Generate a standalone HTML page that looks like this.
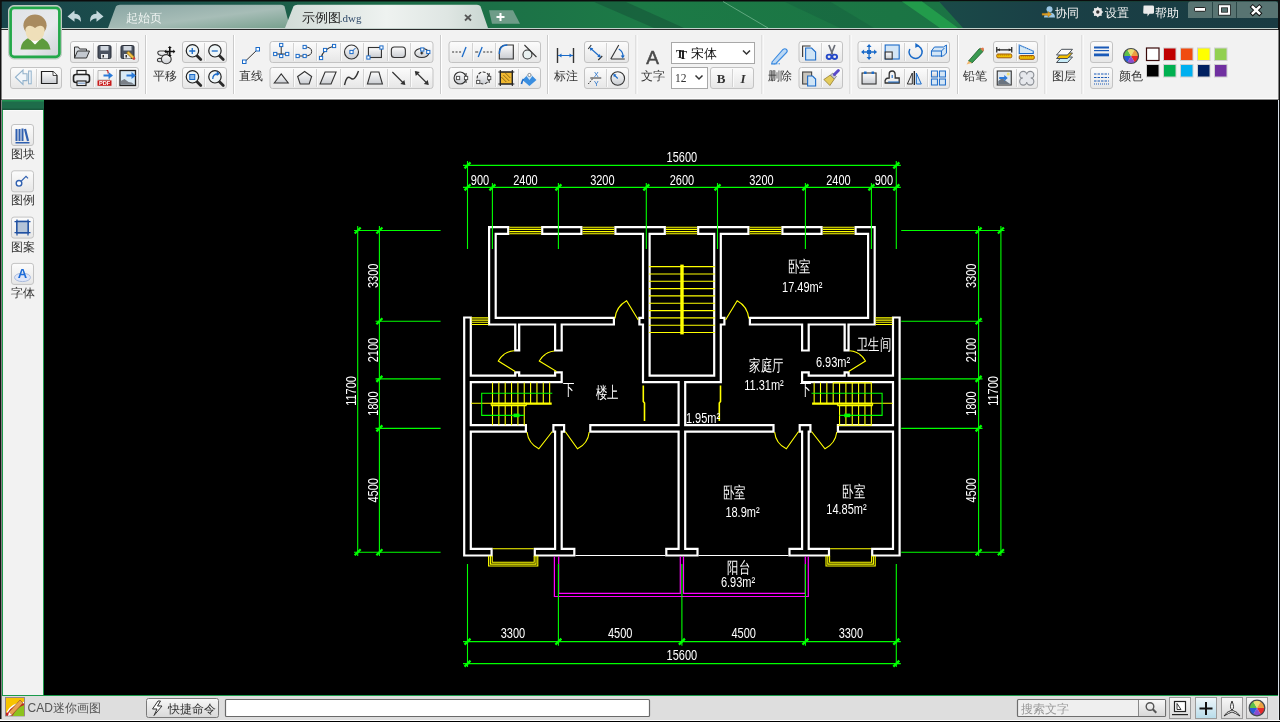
<!DOCTYPE html>
<html><head><meta charset="utf-8">
<style>
*{margin:0;padding:0;box-sizing:border-box}
html,body{width:1280px;height:722px;overflow:hidden;background:#000;font-family:"Liberation Sans",sans-serif;}
.a{position:absolute;left:0;top:0;will-change:transform}
</style></head>
<body>
<svg class="a" width="1280" height="30" style="font-family:'Liberation Sans',sans-serif">
<defs>
<linearGradient id="tg" x1="0" x2="1" y1="0" y2="0">
<stop offset="0" stop-color="#1a464c"/><stop offset="0.12" stop-color="#1b4e4b"/>
<stop offset="0.3" stop-color="#1c6a48"/><stop offset="0.5" stop-color="#1c7a46"/><stop offset="0.7" stop-color="#1b7544"/><stop offset="1" stop-color="#1b6a45"/>
</linearGradient>
<linearGradient id="tgr" x1="0" x2="1" y1="0" y2="0"><stop offset="0" stop-color="#1a4a48"/><stop offset="0.3" stop-color="#1a4046"/><stop offset="1" stop-color="#193b42"/></linearGradient>
<linearGradient id="tab1" x1="0" x2="1" y1="0" y2="1">
<stop offset="0" stop-color="#8aa6a4"/><stop offset="0.55" stop-color="#a7bdb7"/><stop offset="1" stop-color="#77a08d"/>
</linearGradient>
<linearGradient id="tab2" x1="0" x2="1" y1="0" y2="0">
<stop offset="0" stop-color="#d2dcd8"/><stop offset="0.5" stop-color="#eef2f0"/><stop offset="0.8" stop-color="#dfe6e3"/><stop offset="1" stop-color="#c9d6d1"/>
</linearGradient>
</defs>
<rect x="0" y="0" width="1280" height="30" fill="#0c0c0c"/>
<rect x="1.5" y="1.5" width="1276.5" height="27" fill="url(#tg)"/>
<path d="M593,1.5 L625,1.5 L684,28 L654,28 Z" fill="#134a36" opacity="0.45"/>
<path d="M784,1.5 L830,1.5 L874,28 L840,28 Z" fill="#145a3c" opacity="0.35"/>
<path d="M723,1.5 L768,28" stroke="#9ad0b0" stroke-width="0.9" opacity="0.6"/>
<path d="M939,1.5 L1278,1.5 L1278,28 L963,28 Z" fill="url(#tgr)"/>
<path d="M902,1.5 L922,1.5 L958,28 L940,28 Z" fill="#26a84e" opacity="0.75"/>
<rect x="0" y="28" width="1280" height="1" fill="#c4d2cd"/>
<rect x="0" y="29" width="1280" height="1" fill="#2a2a2a"/>
<path d="M108,28 L116,6.2 Q117,4.7 120,4.7 L281,4.7 Q283.5,4.7 284.5,6.2 L290,28 Z" fill="url(#tab1)"/>
<path d="M285,28 L293.5,6.3 Q294.5,4.8 297.5,4.8 L477,4.8 Q479.5,4.8 480.5,6.3 L488,28 Z" fill="url(#tab2)"/>
<path d="M492,23.8 L489,10.2 L513,10.2 L520,23.8 Z" fill="#6e9c88"/>
<path d="M500.5,13 v8 M496.5,17 h8" stroke="#fff" stroke-width="2"/>
<text x="125.5" y="22" font-size="12" fill="#eef3f1">起始页</text>
<text x="302" y="22" font-size="12.5" fill="#1e1e1e">示例图</text>
<text x="339.8" y="21.5" font-size="11" fill="#2d4868" style="font-family:'Liberation Serif',serif">.dwg</text>
<path d="M465,14.8 L471,20.5 M471,14.8 L465,20.5" stroke="#555" stroke-width="1.8"/>
<path d="M67.5,16.5 L74.5,10.5 L74.5,13.8 Q81.5,13.8 81,22 Q78.5,18 74.5,18.5 L74.5,21.8 Z" fill="#c3d7dc"/>
<path d="M103.5,16.5 L96.5,10.5 L96.5,13.8 Q89.5,13.8 90,22 Q92.5,18 96.5,18.5 L96.5,21.8 Z" fill="#c3d7dc"/>
<path d="M1188,18 L1188,4 Q1188,1.5 1190.5,1.5 L1275.5,1.5 Q1278,1.5 1278,4 L1278,18 Z" fill="#587472"/>
<rect x="1212" y="2" width="1" height="16" fill="#2b4747"/>
<rect x="1236" y="2" width="1" height="16" fill="#2b4747"/>
<rect x="1194.5" y="7.5" width="11" height="3.8" rx="0.8" fill="#fff" stroke="#111" stroke-width="0.9"/>
<rect x="1220" y="6.3" width="9" height="7.4" fill="none" stroke="#111" stroke-width="3.6"/>
<rect x="1220" y="6.3" width="9" height="7.4" fill="none" stroke="#fff" stroke-width="2.2"/>
<path d="M1252.8,7 L1259.3,13.3 M1259.3,7 L1252.8,13.3" stroke="#111" stroke-width="4.4" stroke-linecap="square"/>
<path d="M1252.8,7 L1259.3,13.3 M1259.3,7 L1252.8,13.3" stroke="#fff" stroke-width="2.5" stroke-linecap="square"/>
<circle cx="1049.5" cy="9.2" r="3" fill="#9cc7e4"/><path d="M1044,17.5 Q1044,12.5 1049.5,12.5 Q1055,12.5 1055,17.5 Z" fill="#9cc7e4"/>
<path d="M1042,13.3 L1048,13.3 L1048,11.5 L1051.5,14.3 L1048,17 L1048,15.3 L1042,15.3 Z" fill="#e0a020" stroke="#8a5a10" stroke-width="0.4"/>
<text x="1055" y="16.8" font-size="12" fill="#f4f4f4">协同</text>
<g transform="translate(1097.8,12)"><circle r="4.3" fill="#e8e8e8"/><path d="M0,-5.5 L1.5,-3.5 L-1.5,-3.5Z M0,5.5 L1.5,3.5 L-1.5,3.5Z M-5.5,0 L-3.5,1.5 L-3.5,-1.5Z M5.5,0 L3.5,1.5 L3.5,-1.5Z M3.9,3.9 L1.6,3.6 L3.6,1.6Z M-3.9,-3.9 L-1.6,-3.6 L-3.6,-1.6Z M3.9,-3.9 L1.6,-3.6 L3.6,-1.6Z M-3.9,3.9 L-1.6,3.6 L-3.6,1.6Z" fill="#e8e8e8"/><circle r="1.7" fill="#333"/></g>
<text x="1105" y="16.8" font-size="12" fill="#f4f4f4">设置</text>
<path d="M1143.5,6.5 Q1143,5.5 1144.5,5.5 L1152.5,5.5 Q1154,5.5 1154,6.8 L1154,12.5 Q1154,13.8 1152.5,13.8 L1149.5,13.8 L1147.5,16.5 L1147.5,13.8 L1144.5,13.8 Q1143.2,13.8 1143.2,12.5 Z" fill="#eaeaea"/>
<text x="1154.5" y="16.8" font-size="12" fill="#f4f4f4">帮助</text>
<rect x="0" y="0" width="1.5" height="30" fill="#111"/>
<rect x="1278" y="0" width="2" height="30" fill="#111"/>
</svg>
<svg class="a" style="top:30px" width="1280" height="70" viewBox="0 30 1280 70">
<defs>
<linearGradient id="bg" x1="0" x2="0" y1="0" y2="1"><stop offset="0" stop-color="#fcfcfc"/><stop offset="0.5" stop-color="#f1f1f1"/><stop offset="1" stop-color="#e6e6e6"/></linearGradient>
<linearGradient id="av" x1="0" x2="1" y1="0" y2="1"><stop offset="0" stop-color="#dfe2e6"/><stop offset="0.6" stop-color="#e8eaed"/><stop offset="1" stop-color="#cfd3d8"/></linearGradient>
<linearGradient id="ic" x1="0" x2="0" y1="0" y2="1"><stop offset="0" stop-color="#fdfdfd"/><stop offset="1" stop-color="#c9ccd1"/></linearGradient>
<radialGradient id="cw"><stop offset="0" stop-color="#fff"/><stop offset="1" stop-color="#ccc"/></radialGradient>
</defs>
<rect x="0" y="30" width="1280" height="68" fill="#f2f2f2"/>
<rect x="0" y="98" width="1280" height="1" fill="#fdfdfd"/>
<rect x="0" y="99" width="1280" height="1" fill="#8c8c8c"/>
<rect x="0" y="30" width="1.5" height="70" fill="#111"/>
<rect x="1278.5" y="30" width="1.5" height="70" fill="#111"/>

<rect x="10.5" y="67.5" width="51" height="21" rx="2.5" fill="url(#bg)" stroke="#c3c3c3"/><rect x="36" y="69" width="1" height="18" fill="#d3d3d3"/><rect x="37" y="69" width="1" height="18" fill="#fafafa"/>
<path d="M15.5,77.2 L23,70 L23,73.8 L27,73.8 L27,80.6 L23,80.6 L23,84.4 Z" fill="#f2f6fa" stroke="#92b2cc" stroke-width="1.1"/><rect x="28.6" y="71" width="2.6" height="12.8" fill="#f2f6fa" stroke="#92b2cc" stroke-width="1"/>
<path d="M41.5,71.5 L53,71.5 L57,75.5 L57,83.5 L41.5,83.5 Z" fill="url(#ic)" stroke="#222" stroke-width="1.2"/><path d="M53,71.5 L53,75.5 L57,75.5" fill="#fff" stroke="#222" stroke-width="0.8"/>
<rect x="70.5" y="41.5" width="68" height="21" rx="2.5" fill="url(#bg)" stroke="#c3c3c3"/><rect x="93" y="43" width="1" height="18" fill="#d3d3d3"/><rect x="94" y="43" width="1" height="18" fill="#fafafa"/><rect x="116" y="43" width="1" height="18" fill="#d3d3d3"/><rect x="117" y="43" width="1" height="18" fill="#fafafa"/>
<path d="M74.5,58 L74.5,47 L78.5,47 L79.5,49 L86.5,49 L86.5,51 Z" fill="#d9dde2" stroke="#333" stroke-width="1"/><path d="M74.5,58 L77.5,51 L89.5,51 L86.5,58 Z" fill="#c3c8cf" stroke="#333" stroke-width="1"/>
<rect x="98.0" y="45.5" width="13" height="13" rx="1.5" fill="#4a5260" stroke="#2a2f38"/><rect x="100.5" y="46" width="8" height="4.5" fill="#d0d6de"/><rect x="101.0" y="54" width="7" height="4.5" fill="#e8ebee"/><rect x="102.5" y="55" width="1.5" height="2.5" fill="#333"/>
<rect x="121.0" y="45.5" width="13" height="13" rx="1.5" fill="#4a5260" stroke="#2a2f38"/><rect x="123.5" y="46" width="8" height="4.5" fill="#d0d6de"/><rect x="124.0" y="54" width="7" height="4.5" fill="#e8ebee"/><rect x="125.5" y="55" width="1.5" height="2.5" fill="#333"/>
<path d="M126.5,53 L132.5,59 L134.5,59 L134.5,57 L128.5,51 Z" fill="#f0c040" stroke="#7a5a10" stroke-width="0.7"/><circle cx="134.0" cy="58.5" r="1.3" fill="#d04040"/>
<rect x="70.5" y="67.5" width="68" height="21" rx="2.5" fill="url(#bg)" stroke="#c3c3c3"/><rect x="93" y="69" width="1" height="18" fill="#d3d3d3"/><rect x="94" y="69" width="1" height="18" fill="#fafafa"/><rect x="116" y="69" width="1" height="18" fill="#d3d3d3"/><rect x="117" y="69" width="1" height="18" fill="#fafafa"/>
<rect x="77.0" y="70.5" width="9" height="4" fill="#fff" stroke="#222" stroke-width="1.2"/><rect x="73.5" y="74.5" width="16" height="8" rx="2.5" fill="#e9ebee" stroke="#222" stroke-width="1.6"/><rect x="77.0" y="81" width="9" height="4.5" fill="#fff" stroke="#222" stroke-width="1.2"/><rect x="78.0" y="82.5" width="7" height="1.4" fill="#8aa8d0"/>
<path d="M98.0,70.5 L106.5,70.5 L109.5,73.5 L109.5,80 L98.0,80 Z" fill="#f4f4f4" stroke="#aaa" stroke-width="0.8"/><rect x="97.5" y="80.4" width="14" height="5.4" fill="#c81a1a"/><text x="104.5" y="85.3" font-size="5.6" font-weight="bold" fill="#fff" text-anchor="middle">PDF</text><path d="M103.5,74.5 h5 v-2.6 l4.5,3.6 l-4.5,3.6 v-2.6 h-5z" fill="#2a7ad8"/><path d="M106.5,70.5 l1.5,0 v3" stroke="#c81a1a" fill="none"/>
<rect x="120.0" y="70.5" width="15.5" height="15" fill="#d8eaf6" stroke="#222" stroke-width="1.3"/><path d="M120.7,84.8 L120.7,81 L124.5,79 L128.5,82 L131.5,82.5 L134.8,84.8Z" fill="#7a8088"/><path d="M126.5,74.5 h5 v-2.6 l4.5,3.6 l-4.5,3.6 v-2.6 h-5z" fill="#2a7ad8"/>
<rect x="145" y="35" width="1" height="59" fill="#cbcbcb"/><rect x="146" y="35" width="1" height="59" fill="#fff"/>
<g stroke="#3a3a3a" stroke-width="1.1" fill="url(#ic)"><path d="M157.5,59.5 Q157,61.8 159.5,61.8 L164,61.5 L164,58.5 L159.5,58.3 Q157.8,58.3 157.5,59.5Z"/><path d="M157.8,53 Q157.5,51.2 160,51 L164,51 Q166,51 168,53 L166,56 L161,55.5 Q158,55 157.8,53Z"/><ellipse cx="166.3" cy="59.2" rx="4.9" ry="4.6"/></g><path d="M169.8,47.2 v8.6 M165.5,51.5 h8.6" stroke="#111" stroke-width="1.6"/><path d="M169.8,46 l-2,2 h4z M169.8,57 l-2,-2 h4z M164.3,51.5 l2,-2 v4z M175.3,51.5 l-2,-2 v4z" fill="#111"/>
<text x="164.5" y="80.3" font-size="12" fill="#333" text-anchor="middle">平移</text>
<rect x="182.5" y="41.5" width="44" height="21" rx="2.5" fill="url(#bg)" stroke="#c3c3c3"/><rect x="204" y="43" width="1" height="18" fill="#d3d3d3"/><rect x="205" y="43" width="1" height="18" fill="#fafafa"/>
<line x1="196.75" y1="55.5" x2="200.75" y2="59.5" stroke="#2a2a2a" stroke-width="2.8" stroke-linecap="round"/><circle cx="192.45" cy="50.8" r="6.2" fill="#eef5f7" stroke="#222" stroke-width="1.2"/><path d="M189.25,51 h6 M192.25,48 v6" stroke="#1a6ac8" stroke-width="1.3"/>
<line x1="219.25" y1="55.5" x2="223.25" y2="59.5" stroke="#2a2a2a" stroke-width="2.8" stroke-linecap="round"/><circle cx="214.95" cy="50.8" r="6.2" fill="#eef5f7" stroke="#222" stroke-width="1.2"/><path d="M211.75,51 h6" stroke="#1a6ac8" stroke-width="1.3"/>
<rect x="182.5" y="67.5" width="44" height="21" rx="2.5" fill="url(#bg)" stroke="#c3c3c3"/><rect x="204" y="69" width="1" height="18" fill="#d3d3d3"/><rect x="205" y="69" width="1" height="18" fill="#fafafa"/>
<line x1="196.75" y1="81.5" x2="200.75" y2="85.5" stroke="#2a2a2a" stroke-width="2.8" stroke-linecap="round"/><circle cx="192.45" cy="76.8" r="6.2" fill="#eef5f7" stroke="#222" stroke-width="1.2"/><rect x="189.75" y="74.5" width="5" height="5" fill="#8ab8e8" stroke="#1a6ac8"/>
<line x1="219.25" y1="81.5" x2="223.25" y2="85.5" stroke="#2a2a2a" stroke-width="2.8" stroke-linecap="round"/><circle cx="214.95" cy="76.8" r="6.2" fill="#eef5f7" stroke="#222" stroke-width="1.2"/><path d="M212.75,79 Q212.75,74 217.75,74" fill="none" stroke="#1a6ac8" stroke-width="1.3"/><path d="M216.75,71 l3,3 l-3,2z" fill="#1a6ac8"/>
<rect x="233" y="35" width="1" height="59" fill="#cbcbcb"/><rect x="234" y="35" width="1" height="59" fill="#fff"/>
<line x1="244.5" y1="62" x2="257.5" y2="49.5" stroke="#333" stroke-width="1"/><rect x="242.5" y="60" width="3.5" height="3.5" fill="#fff" stroke="#1a6ac8"/><rect x="256" y="47.5" width="3.5" height="3.5" fill="#fff" stroke="#1a6ac8"/>
<text x="251" y="80.3" font-size="12" fill="#333" text-anchor="middle">直线</text>
<rect x="270.0" y="41.5" width="163.0" height="21" rx="2.5" fill="url(#bg)" stroke="#c3c3c3"/><rect x="293" y="43" width="1" height="18" fill="#d3d3d3"/><rect x="294" y="43" width="1" height="18" fill="#fafafa"/><rect x="316" y="43" width="1" height="18" fill="#d3d3d3"/><rect x="317" y="43" width="1" height="18" fill="#fafafa"/><rect x="340" y="43" width="1" height="18" fill="#d3d3d3"/><rect x="341" y="43" width="1" height="18" fill="#fafafa"/><rect x="363" y="43" width="1" height="18" fill="#d3d3d3"/><rect x="364" y="43" width="1" height="18" fill="#fafafa"/><rect x="387" y="43" width="1" height="18" fill="#d3d3d3"/><rect x="388" y="43" width="1" height="18" fill="#fafafa"/><rect x="410" y="43" width="1" height="18" fill="#d3d3d3"/><rect x="411" y="43" width="1" height="18" fill="#fafafa"/>
<path d="M281.2142857142857,45 v13 M275.2142857142857,54 h12" stroke="#333" stroke-width="1"/><rect x="279.6142857142857" y="43.4" width="3.2" height="3.2" fill="#fff" stroke="#1a6ac8" stroke-width="1"/><rect x="279.6142857142857" y="54.4" width="3.2" height="3.2" fill="#fff" stroke="#1a6ac8" stroke-width="1"/><rect x="273.6142857142857" y="52.4" width="3.2" height="3.2" fill="#fff" stroke="#1a6ac8" stroke-width="1"/><rect x="285.6142857142857" y="52.4" width="3.2" height="3.2" fill="#fff" stroke="#1a6ac8" stroke-width="1"/>
<path d="M297.6428571428571,56 h7 q7,0 7,-4.5 q0,-4.5 -7,-4.5" fill="none" stroke="#333" stroke-width="1"/><rect x="296.0428571428571" y="54.4" width="3.2" height="3.2" fill="#fff" stroke="#1a6ac8" stroke-width="1"/><rect x="303.0428571428571" y="54.4" width="3.2" height="3.2" fill="#fff" stroke="#1a6ac8" stroke-width="1"/><rect x="303.0428571428571" y="45.4" width="3.2" height="3.2" fill="#fff" stroke="#1a6ac8" stroke-width="1"/>
<path d="M321.07142857142856,58 Q323.07142857142856,49 334.07142857142856,46" fill="none" stroke="#333" stroke-width="1.2"/><rect x="319.47142857142853" y="56.4" width="3.2" height="3.2" fill="#fff" stroke="#1a6ac8" stroke-width="1"/><rect x="323.47142857142853" y="48.4" width="3.2" height="3.2" fill="#fff" stroke="#1a6ac8" stroke-width="1"/><rect x="332.47142857142853" y="44.4" width="3.2" height="3.2" fill="#fff" stroke="#1a6ac8" stroke-width="1"/>
<circle cx="351.5" cy="52" r="7" fill="url(#ic)" stroke="#333" stroke-width="1.1"/><line x1="351.5" y1="52" x2="355.5" y2="48" stroke="#1a6ac8"/><rect x="349.9" y="50.4" width="3.2" height="3.2" fill="#fff" stroke="#1a6ac8" stroke-width="1"/>
<rect x="368.42857142857144" y="47.5" width="13" height="10" fill="url(#ic)" stroke="#333" stroke-width="1.1"/><rect x="366.8285714285714" y="55.9" width="3.2" height="3.2" fill="#fff" stroke="#1a6ac8" stroke-width="1"/><rect x="379.8285714285714" y="45.9" width="3.2" height="3.2" fill="#fff" stroke="#1a6ac8" stroke-width="1"/>
<rect x="391.3571428571429" y="47" width="14" height="10.5" rx="3" fill="url(#ic)" stroke="#333" stroke-width="1.1"/>
<ellipse cx="421.7857142857143" cy="53" rx="7" ry="4.5" fill="url(#ic)" stroke="#333" stroke-width="1.1"/><path d="M420.2857142857143,53 h3 M421.7857142857143,51.5 v3" stroke="#111"/><rect x="420.68571428571425" y="47.9" width="3.2" height="3.2" fill="#fff" stroke="#1a6ac8" stroke-width="1"/><rect x="426.68571428571425" y="50.4" width="3.2" height="3.2" fill="#fff" stroke="#1a6ac8" stroke-width="1"/>
<rect x="270.0" y="67.5" width="163.0" height="21" rx="2.5" fill="url(#bg)" stroke="#c3c3c3"/><rect x="293" y="69" width="1" height="18" fill="#d3d3d3"/><rect x="294" y="69" width="1" height="18" fill="#fafafa"/><rect x="316" y="69" width="1" height="18" fill="#d3d3d3"/><rect x="317" y="69" width="1" height="18" fill="#fafafa"/><rect x="340" y="69" width="1" height="18" fill="#d3d3d3"/><rect x="341" y="69" width="1" height="18" fill="#fafafa"/><rect x="363" y="69" width="1" height="18" fill="#d3d3d3"/><rect x="364" y="69" width="1" height="18" fill="#fafafa"/><rect x="387" y="69" width="1" height="18" fill="#d3d3d3"/><rect x="388" y="69" width="1" height="18" fill="#fafafa"/><rect x="410" y="69" width="1" height="18" fill="#d3d3d3"/><rect x="411" y="69" width="1" height="18" fill="#fafafa"/>
<path d="M274.2142857142857,83 L281.2142857142857,74 L288.2142857142857,83 Z" fill="url(#ic)" stroke="#333" stroke-width="1.1"/>
<path d="M304.6428571428571,71.5 L311.6428571428571,76.5 L309.1428571428571,84 L300.1428571428571,84 L297.6428571428571,76.5 Z" fill="url(#ic)" stroke="#333" stroke-width="1.1"/>
<path d="M325.07142857142856,72 L336.07142857142856,72 L331.07142857142856,84 L320.07142857142856,84 Z" fill="url(#ic)" stroke="#333" stroke-width="1.1"/>
<path d="M344.5,85 Q346.5,75 350.5,78 Q354.5,82 358.5,71" fill="none" stroke="#333" stroke-width="1.4"/>
<path d="M370.92857142857144,72 L378.92857142857144,72 L382.42857142857144,84 L367.42857142857144,84 Z" fill="url(#ic)" stroke="#333" stroke-width="1.1"/>
<path d="M392.3571428571429,72 L404.3571428571429,84" stroke="#333" stroke-width="1.1"/><path d="M405.3571428571429,85 l-5,-1 l4,-4z" fill="#333"/>
<path d="M415.7857142857143,72 L427.7857142857143,84" stroke="#333" stroke-width="1.1"/><path d="M428.7857142857143,85 l-5,-1 l4,-4z M414.7857142857143,71 l5,1 l-4,4z" fill="#333"/>
<rect x="440" y="35" width="1" height="59" fill="#cbcbcb"/><rect x="441" y="35" width="1" height="59" fill="#fff"/>
<rect x="449.0" y="41.5" width="91.5" height="21" rx="2.5" fill="url(#bg)" stroke="#c3c3c3"/><rect x="472" y="43" width="1" height="18" fill="#d3d3d3"/><rect x="473" y="43" width="1" height="18" fill="#fafafa"/><rect x="495" y="43" width="1" height="18" fill="#d3d3d3"/><rect x="496" y="43" width="1" height="18" fill="#fafafa"/><rect x="518" y="43" width="1" height="18" fill="#d3d3d3"/><rect x="519" y="43" width="1" height="18" fill="#fafafa"/>
<path d="M452.0625,52 h2 M455.5625,52 h2 M459.0625,52 h2" stroke="#333" stroke-width="1.1"/><path d="M462.0625,57 L466.0625,47" stroke="#1a6ac8" stroke-width="1.3"/>
<path d="M475.1875,52 h3 M483.1875,52 h2 M486.6875,52 h2 M490.1875,52 h2" stroke="#333" stroke-width="1.1"/><path d="M478.1875,57 L482.1875,47" stroke="#1a6ac8" stroke-width="1.3"/>
<path d="M499.3125,59 L499.3125,52 Q499.3125,45 506.3125,45 L513.3125,45 L513.3125,59 Z" fill="url(#ic)" stroke="#333" stroke-width="1.1"/><path d="M499.3125,54 Q499.3125,45 507.3125,45" fill="none" stroke="#1a6ac8" stroke-width="1.3"/>
<circle cx="527.4375" cy="54.5" r="4.5" fill="#e8f0f0" stroke="#333" stroke-width="1.1"/><line x1="524.4375" y1="45" x2="536.4375" y2="57" stroke="#333" stroke-width="1.1"/>
<rect x="449.0" y="67.5" width="91.5" height="21" rx="2.5" fill="url(#bg)" stroke="#c3c3c3"/><rect x="472" y="69" width="1" height="18" fill="#d3d3d3"/><rect x="473" y="69" width="1" height="18" fill="#fafafa"/><rect x="495" y="69" width="1" height="18" fill="#d3d3d3"/><rect x="496" y="69" width="1" height="18" fill="#fafafa"/><rect x="518" y="69" width="1" height="18" fill="#d3d3d3"/><rect x="519" y="69" width="1" height="18" fill="#fafafa"/>
<circle cx="460.0625" cy="78" r="6" fill="url(#ic)" stroke="#333" stroke-width="1.1" stroke-dasharray="40 3"/><path d="M466.0625,73 v10" stroke="#333"/><rect x="464.4625" y="76.4" width="3.2" height="3.2" fill="#fff" stroke="#555" stroke-width="1"/><rect x="456.4625" y="76.4" width="3.2" height="3.2" fill="#fff" stroke="#555" stroke-width="1"/>
<circle cx="483.1875" cy="78" r="6" fill="url(#ic)" stroke="#333" stroke-width="1.1" stroke-dasharray="3 1.5"/><path d="M489.1875,73 v10" stroke="#333"/><rect x="487.5875" y="76.4" width="3.2" height="3.2" fill="#fff" stroke="#555" stroke-width="1"/><rect x="476.5875" y="80.4" width="3.2" height="3.2" fill="#fff" stroke="#555" stroke-width="1"/>
<rect x="500.3125" y="72" width="12" height="12" fill="#f0b830" stroke="#333" stroke-width="1.1"/><path d="M498.3125,72 h16 M498.3125,84 h16 M500.3125,70 v16 M512.3125,70 v16" stroke="#222" stroke-width="1.1"/><path d="M503.3125,75 l6,6 M505.3125,73 l5,5 M501.3125,77 l5,5" stroke="#7a5a10" stroke-width="0.8"/>
<path d="M522.4375,80 L529.4375,73 L536.4375,80 L529.4375,86 Z" fill="#3a8ee0"/><path d="M526.4375,76 L529.4375,73 L532.4375,76 L529.4375,80Z" fill="#cfe6fa"/><path d="M521.4375,84 q1,-4 2,-5" stroke="#1a6ac8" stroke-width="1.6" fill="none"/><circle cx="529.4375" cy="75" r="1.6" fill="#fff" stroke="#555" stroke-width="0.6"/>
<rect x="547" y="35" width="1" height="59" fill="#cbcbcb"/><rect x="548" y="35" width="1" height="59" fill="#fff"/>
<path d="M557.5,48 v15 M573.5,48 v15" stroke="#333" stroke-width="1.4"/><path d="M558,55.5 h15" stroke="#1a6ac8" stroke-width="1"/><path d="M558.5,55.5 l3,-2 v4z M572.5,55.5 l-3,-2 v4z" fill="#1a6ac8"/>
<text x="565.5" y="80.3" font-size="12" fill="#333" text-anchor="middle">标注</text>
<rect x="584.5" y="41.5" width="44" height="21" rx="2.5" fill="url(#bg)" stroke="#c3c3c3"/><rect x="606" y="43" width="1" height="18" fill="#d3d3d3"/><rect x="607" y="43" width="1" height="18" fill="#fafafa"/>
<path d="M588.25,49 l3,-4 M598.25,60 l4,-4" stroke="#333" stroke-width="1.1"/><path d="M590.75,48.5 L599.75,56.5" stroke="#1a6ac8" stroke-width="1.2"/><path d="M589.75,47.5 l3.5,0.8 l-2.7,2.7z M600.75,57.5 l-3.5,-0.8 l2.7,-2.7z" fill="#1a6ac8"/>
<path d="M610.75,59 h14 M610.75,59 L618.75,45" stroke="#333" stroke-width="1.1" fill="none"/><path d="M618.75,49 Q623.75,52 622.75,57" fill="none" stroke="#1a6ac8" stroke-width="1.2"/><path d="M622.75,58.5 l-2,-3 h4z" fill="#1a6ac8"/>
<rect x="584.5" y="67.5" width="44" height="21" rx="2.5" fill="url(#bg)" stroke="#c3c3c3"/><rect x="606" y="69" width="1" height="18" fill="#d3d3d3"/><rect x="607" y="69" width="1" height="18" fill="#fafafa"/>
<text x="596.25" y="76.5" font-size="7" fill="#1a6ac8" text-anchor="middle">X</text><text x="596.25" y="85.5" font-size="7" fill="#1a6ac8" text-anchor="middle">Y</text><path d="M590.25,78 h11" stroke="#333"/><path d="M588.25,84 l5,-6" stroke="#333" stroke-dasharray="1.5 1"/>
<circle cx="617.75" cy="78.5" r="6.8" fill="url(#ic)" stroke="#333" stroke-width="1.1"/><path d="M617.75,78.5 L614.25,75" stroke="#1a6ac8" stroke-width="1.1"/><path d="M613.25,74 l3.2,0.6 l-2.6,2.6z" fill="#1a6ac8"/>
<rect x="635.5" y="35" width="1" height="59" fill="#cbcbcb"/><rect x="636.5" y="35" width="1" height="59" fill="#fff"/>
<text x="652.5" y="63.5" font-size="19" fill="#4a4a4a" stroke="#4a4a4a" stroke-width="0.5" text-anchor="middle">A</text>
<text x="652.5" y="80.3" font-size="12" fill="#333" text-anchor="middle">文字</text>
<rect x="671.5" y="42.5" width="83" height="21" fill="#fff" stroke="#a8a8a8"/>
<text x="676" y="57.5" font-size="12" font-weight="bold" fill="#222" style="font-family:'Liberation Serif',serif">T</text><text x="679" y="59" font-size="12" font-weight="bold" fill="#111" style="font-family:'Liberation Serif',serif">T</text>
<text x="691" y="58" font-size="12.5" fill="#111">宋体</text>
<path d="M743,50.5 l3.5,3.5 l3.5,-3.5" stroke="#333" stroke-width="1.5" fill="none"/>
<rect x="671.5" y="67.5" width="36" height="21" fill="#fff" stroke="#a8a8a8"/>
<text x="675" y="82" font-size="11.5" fill="#333" style="font-family:'Liberation Serif',serif">12</text>
<path d="M695.5,75.5 l3.5,3.5 l3.5,-3.5" stroke="#333" stroke-width="1.5" fill="none"/>

<rect x="710.5" y="67.5" width="43" height="21" rx="2.5" fill="url(#bg)" stroke="#c3c3c3"/><rect x="732" y="69" width="1" height="18" fill="#d3d3d3"/><rect x="733" y="69" width="1" height="18" fill="#fafafa"/>
<text x="721.0" y="82.5" font-size="13" font-weight="bold" fill="#333" text-anchor="middle" style="font-family:'Liberation Serif',serif">B</text><text x="743.0" y="82.5" font-size="13" font-style="italic" font-weight="bold" fill="#333" text-anchor="middle" style="font-family:'Liberation Serif',serif">I</text>
<rect x="761.5" y="35" width="1" height="59" fill="#cbcbcb"/><rect x="762.5" y="35" width="1" height="59" fill="#fff"/>
<path d="M772,62 L783,49.5 Q785,48 786.5,49.5 Q788,51 786.5,52.5 L775.5,64 L772,64 Z" fill="#bcd8f4" stroke="#3a8ae0" stroke-width="1.1"/><path d="M771,63.8 h9" stroke="#3a8ae0" stroke-dasharray="1.5 1"/>
<text x="779.5" y="80.3" font-size="12" fill="#333" text-anchor="middle">删除</text>
<rect x="799.0" y="41.5" width="43.5" height="21" rx="2.5" fill="url(#bg)" stroke="#c3c3c3"/><rect x="821" y="43" width="1" height="18" fill="#d3d3d3"/><rect x="822" y="43" width="1" height="18" fill="#fafafa"/>
<path d="M802.625,57 v-11 h8" fill="none" stroke="#333" stroke-width="1.1"/><path d="M805.625,48 h6 l4,4 v8 h-10z" fill="#cfe4f6" stroke="#1a6ac8" stroke-width="1.1"/>
<path d="M828.875,45 L832.675,54.5 M834.875,45 L831.075,54.5" stroke="#6a6e78" stroke-width="1.7"/><ellipse cx="829.075" cy="56.8" rx="2.4" ry="2.2" fill="none" stroke="#2448c8" stroke-width="1.9"/><ellipse cx="834.675" cy="56.8" rx="2.4" ry="2.2" fill="none" stroke="#2448c8" stroke-width="1.9"/>
<rect x="799.0" y="67.5" width="43.5" height="21" rx="2.5" fill="url(#bg)" stroke="#c3c3c3"/><rect x="821" y="69" width="1" height="18" fill="#d3d3d3"/><rect x="822" y="69" width="1" height="18" fill="#fafafa"/>
<rect x="802.625" y="72" width="9" height="12" fill="#c8c4bc" stroke="#444" stroke-width="1.1"/><path d="M807.625,76 h5 l3,3 v7 h-8z" fill="#cfe4f6" stroke="#1a6ac8" stroke-width="1.1"/>
<path d="M823.875,79.5 L830.375,75 L834.375,79 L829.875,85.5 Z" fill="#e4cc5c" stroke="#8a7020" stroke-width="0.7"/><path d="M830.375,75 L832.875,73 L836.375,76.5 L834.375,79 Z" fill="#c8c8d0" stroke="#666" stroke-width="0.6"/><path d="M834.375,74.5 L838.375,70.5" stroke="#5a4ac8" stroke-width="3" stroke-linecap="round"/>
<rect x="849.5" y="35" width="1" height="59" fill="#cbcbcb"/><rect x="850.5" y="35" width="1" height="59" fill="#fff"/>
<rect x="858.0" y="41.5" width="91.5" height="21" rx="2.5" fill="url(#bg)" stroke="#c3c3c3"/><rect x="881" y="43" width="1" height="18" fill="#d3d3d3"/><rect x="882" y="43" width="1" height="18" fill="#fafafa"/><rect x="904" y="43" width="1" height="18" fill="#d3d3d3"/><rect x="905" y="43" width="1" height="18" fill="#fafafa"/><rect x="927" y="43" width="1" height="18" fill="#d3d3d3"/><rect x="928" y="43" width="1" height="18" fill="#fafafa"/>
<path d="M862.0625,52 h14 M869.0625,45 v14" stroke="#1a6ac8" stroke-width="1.3"/><rect x="867.0625" y="50" width="4" height="4" fill="#1a6ac8"/><path d="M861.0625,52 l3,-2.5 v5z M877.0625,52 l-3,-2.5 v5z M869.0625,44 l-2.5,3 h5z M869.0625,60 l-2.5,-3 h5z" fill="#1a6ac8"/>
<rect x="885.1875" y="45" width="14" height="14" fill="#d4e6f6" stroke="#1a6ac8" stroke-width="1.1"/><rect x="885.1875" y="52" width="7" height="7" fill="url(#ic)" stroke="#333" stroke-width="1.1"/>
<path d="M916.3125,45.5 A6.5,6.5 0 1 1 909.8125,49" fill="none" stroke="#1a6ac8" stroke-width="1.5"/><path d="M915.3125,43 l4,2.5 l-4,2.5z" fill="#1a6ac8"/>
<path d="M931.4375,51 l3,-4 h9 l3,-2 v8 l-3,3 h-9 l-3,0z" fill="#d4e6f6" stroke="#1a6ac8" stroke-width="1"/><path d="M931.4375,51 h10 v6 M941.4375,51 l3,-3" fill="none" stroke="#1a6ac8"/>
<rect x="858.0" y="67.5" width="91.5" height="21" rx="2.5" fill="url(#bg)" stroke="#c3c3c3"/><rect x="881" y="69" width="1" height="18" fill="#d3d3d3"/><rect x="882" y="69" width="1" height="18" fill="#fafafa"/><rect x="904" y="69" width="1" height="18" fill="#d3d3d3"/><rect x="905" y="69" width="1" height="18" fill="#fafafa"/><rect x="927" y="69" width="1" height="18" fill="#d3d3d3"/><rect x="928" y="69" width="1" height="18" fill="#fafafa"/>
<rect x="862.0625" y="73" width="14" height="11" fill="url(#ic)" stroke="#333" stroke-width="1.1"/><rect x="864.0625" y="71.5" width="2.5" height="2.5" fill="#1a6ac8"/><rect x="871.5625" y="71.5" width="2.5" height="2.5" fill="#1a6ac8"/>
<path d="M885.1875,83 Q884.1875,78 889.1875,78 L889.1875,74 Q889.1875,71 892.1875,71 Q895.1875,71 895.1875,75 L895.1875,78 L899.1875,78 L899.1875,83Z" fill="none" stroke="#333" stroke-width="1.3"/><path d="M888.1875,82 h11 M892.1875,75 v3" stroke="#1a6ac8" stroke-width="1.1"/>
<path d="M914.3125,71 v14" stroke="#222" stroke-width="1.3"/><path d="M912.3125,84 L912.3125,73 L907.3125,84Z" fill="none" stroke="#333"/><path d="M916.3125,84 L916.3125,73 L921.3125,84Z" fill="#cfe4f6" stroke="#1a6ac8"/>
<rect x="931.4375" y="71" width="6" height="6" fill="url(#ic)" stroke="#1a6ac8"/><rect x="939.4375" y="71" width="6" height="6" fill="#d4e6f6" stroke="#1a6ac8"/><rect x="931.4375" y="79" width="6" height="6" fill="#d4e6f6" stroke="#1a6ac8"/><rect x="939.4375" y="79" width="6" height="6" fill="#d4e6f6" stroke="#1a6ac8"/>
<rect x="957" y="35" width="1" height="59" fill="#cbcbcb"/><rect x="958" y="35" width="1" height="59" fill="#fff"/>
<path d="M968.5,61 L979,49 Q981,47.5 982.5,49 Q984,50.5 982.5,52 L972,63 Z" fill="#3a9a50" stroke="#1a5a2a" stroke-width="0.8"/><path d="M968.5,61 L966.5,64.5 L972,63 Z" fill="#f4b870"/><path d="M980,48.5 L983,51.5 Q985,49 983,47.5Z" fill="#e07a50"/>
<text x="974.5" y="80.3" font-size="12" fill="#333" text-anchor="middle">铅笔</text>
<rect x="993.5" y="41.5" width="44" height="21" rx="2.5" fill="url(#bg)" stroke="#c3c3c3"/><rect x="1016" y="43" width="1" height="18" fill="#d3d3d3"/><rect x="1017" y="43" width="1" height="18" fill="#fafafa"/>
<path d="M996.75,47 v5.5 M1011.75,47 v5.5 M996.75,49.8 h15" stroke="#222" stroke-width="1.2"/><path d="M997.75,49.8 l2,-1.5 v3z M1010.75,49.8 l-2,-1.5 v3z" fill="#222"/><rect x="996.75" y="54" width="15" height="3.8" rx="1.2" fill="#f2c200" stroke="#a05a08" stroke-width="1"/><path d="M998.75,54.3 v1.5 M1000.75,54.3 v1.5 M1002.75,54.3 v1.5 M1004.75,54.3 v1.5 M1006.75,54.3 v1.5 M1008.75,54.3 v1.5" stroke="#a05a08" stroke-width="0.6"/>
<path d="M1019.25,45 L1019.25,53.5 L1033.25,53.5 L1033.25,51 Z" fill="#d4e8f4" stroke="#1a6ac8" stroke-width="1.1"/><path d="M1019.25,45 L1033.25,51" stroke="#fff" stroke-width="0.6" stroke-dasharray="1.2 1.2"/><rect x="1019.25" y="55.5" width="15" height="3.8" rx="1.2" fill="#f2c200" stroke="#a05a08" stroke-width="1"/><path d="M1021.25,55.8 v1.5 M1023.25,55.8 v1.5 M1025.25,55.8 v1.5 M1027.25,55.8 v1.5 M1029.25,55.8 v1.5 M1031.25,55.8 v1.5" stroke="#a05a08" stroke-width="0.6"/>
<rect x="993.5" y="67.5" width="44" height="21" rx="2.5" fill="url(#bg)" stroke="#c3c3c3"/><rect x="1016" y="69" width="1" height="18" fill="#d3d3d3"/><rect x="1017" y="69" width="1" height="18" fill="#fafafa"/>
<rect x="997.25" y="71" width="14" height="14" fill="#dfe8f0" stroke="#333" stroke-width="1.1"/><path d="M998.25,84 L998.25,81 L1002.25,78 L1007.25,82 L1010.25,84Z" fill="#6a7480"/><path d="M999.25,77 h5 v-2 l3.5,3 l-3.5,3 v-2 h-5z" fill="#2a7ad8"/><circle cx="1008.25" cy="74" r="1.5" fill="#f0e070"/>
<g fill="#e6e8ec" stroke="#8a8e94" stroke-width="1.1"><circle cx="1023.25" cy="75" r="3.6"/><circle cx="1030.25" cy="75" r="3.6"/><circle cx="1023.25" cy="81.5" r="3.6"/><circle cx="1030.25" cy="81.5" r="3.6"/></g><rect x="1022.75" y="74.5" width="8" height="7.5" fill="#e6e8ec"/>
<rect x="1044.5" y="35" width="1" height="59" fill="#cbcbcb"/><rect x="1045.5" y="35" width="1" height="59" fill="#fff"/>
<path d="M1056.5,62.5 L1061.5,57 L1072.5,57 L1067.5,62.5 Z" fill="#c8ecf8" stroke="#4a5058" stroke-width="1"/><path d="M1056.5,58.5 L1061.5,53 L1072.5,53 L1067.5,58.5 Z" fill="#f4c000" stroke="#4a5058" stroke-width="1"/><path d="M1056.5,55 L1061.5,49.3 L1072.5,49.3 L1067.5,55 Z" fill="#fbfbfb" stroke="#4a5058" stroke-width="1"/>
<text x="1063.5" y="80.3" font-size="12" fill="#333" text-anchor="middle">图层</text>
<rect x="1081.5" y="35" width="1" height="59" fill="#cbcbcb"/><rect x="1082.5" y="35" width="1" height="59" fill="#fff"/>
<rect x="1090.5" y="41.5" width="22" height="21" rx="2.5" fill="url(#bg)" stroke="#c3c3c3"/>
<rect x="1094" y="46.5" width="15" height="2" fill="#1a5ab8"/><rect x="1094" y="50" width="15" height="1.2" fill="#1a5ab8"/><rect x="1094" y="53.5" width="15" height="2.8" fill="#1a5ab8"/>
<rect x="1090.5" y="67.5" width="22" height="21" rx="2.5" fill="url(#bg)" stroke="#c3c3c3"/>
<path d="M1094,74 h15 M1094,77.5 h15 M1094,81 h15" stroke="#1a5ab8" stroke-width="1" stroke-dasharray="2.5 1"/><path d="M1094,84 h15" stroke="#1a5ab8" stroke-width="1" stroke-dasharray="1 1"/>

<path d="M1131,56 L1138.50,56.00 A7.5,7.5 0 0 1 1134.75,62.50 Z" fill="#e82a2a"/><path d="M1131,56 L1134.75,62.50 A7.5,7.5 0 0 1 1127.25,62.50 Z" fill="#8a4ed0"/><path d="M1131,56 L1127.25,62.50 A7.5,7.5 0 0 1 1123.50,56.00 Z" fill="#2a5ad8"/><path d="M1131,56 L1123.50,56.00 A7.5,7.5 0 0 1 1127.25,49.50 Z" fill="#5cc048"/><path d="M1131,56 L1127.25,49.50 A7.5,7.5 0 0 1 1134.75,49.50 Z" fill="#ece070"/><path d="M1131,56 L1134.75,49.50 A7.5,7.5 0 0 1 1138.50,56.00 Z" fill="#eca040"/><circle cx="1131" cy="56" r="7.5" fill="none" stroke="#454a50" stroke-width="1.2"/>
<text x="1130.5" y="80.3" font-size="12" fill="#333" text-anchor="middle">颜色</text>
<rect x="1146.5" y="48" width="12.5" height="12.5" fill="#ffffff" stroke="#3a0a0a" stroke-width="1.2"/>
<rect x="1146.5" y="64.5" width="12.5" height="12.5" fill="#000000" stroke="#d0d0d0"/>
<rect x="1163.5" y="48" width="12.5" height="12.5" fill="#c00000" stroke="#d0d0d0" stroke-width="1"/>
<rect x="1163.5" y="64.5" width="12.5" height="12.5" fill="#00b050" stroke="#d0d0d0"/>
<rect x="1180.5" y="48" width="12.5" height="12.5" fill="#f04c10" stroke="#d0d0d0" stroke-width="1"/>
<rect x="1180.5" y="64.5" width="12.5" height="12.5" fill="#00b0f0" stroke="#d0d0d0"/>
<rect x="1197.5" y="48" width="12.5" height="12.5" fill="#ffff00" stroke="#d0d0d0" stroke-width="1"/>
<rect x="1197.5" y="64.5" width="12.5" height="12.5" fill="#002060" stroke="#d0d0d0"/>
<rect x="1214.5" y="48" width="12.5" height="12.5" fill="#92d050" stroke="#d0d0d0" stroke-width="1"/>
<rect x="1214.5" y="64.5" width="12.5" height="12.5" fill="#7030a0" stroke="#d0d0d0"/>
</svg><svg class="a" style="top:100px" width="46" height="596" viewBox="0 100 46 596">
<rect x="0" y="100" width="46" height="596" fill="#f2f2f2"/>
<rect x="0" y="100" width="1.5" height="596" fill="#111"/>
<rect x="2" y="100" width="1" height="596" fill="#1f9a4c"/>
<rect x="43" y="100" width="1" height="596" fill="#1f9a4c"/>
<rect x="44" y="100" width="2" height="596" fill="#000"/>
<rect x="2" y="100" width="42" height="10" fill="#1e6c4a"/>
<rect x="2" y="100" width="42" height="1.5" fill="#1f9050"/>
<rect x="2" y="108.5" width="42" height="1.5" fill="#195a3e"/>
<rect x="3" y="110" width="40" height="1" fill="#fafafa"/>

<rect x="11.5" y="124.5" width="22" height="21" rx="2.5" fill="url(#bg)" stroke="#c3c3c3"/>
<text x="22.5" y="158.0" font-size="12" fill="#333" text-anchor="middle" style="font-family:'Liberation Sans',sans-serif">图块</text>
<rect x="11.5" y="170.8" width="22" height="21" rx="2.5" fill="url(#bg)" stroke="#c3c3c3"/>
<text x="22.5" y="204.3" font-size="12" fill="#333" text-anchor="middle" style="font-family:'Liberation Sans',sans-serif">图例</text>
<rect x="11.5" y="217.1" width="22" height="21" rx="2.5" fill="url(#bg)" stroke="#c3c3c3"/>
<text x="22.5" y="250.6" font-size="12" fill="#333" text-anchor="middle" style="font-family:'Liberation Sans',sans-serif">图案</text>
<rect x="11.5" y="263.4" width="22" height="21" rx="2.5" fill="url(#bg)" stroke="#c3c3c3"/>
<text x="22.5" y="296.9" font-size="12" fill="#333" text-anchor="middle" style="font-family:'Liberation Sans',sans-serif">字体</text>
<path d="M16.5,129 v12 M19.5,129 v12 M22.5,128.5 v12.5" stroke="#3060b0" stroke-width="2"/><path d="M25,129 L28,141" stroke="#3060b0" stroke-width="2.2"/><rect x="15.5" y="142" width="14" height="1.5" fill="#3060b0"/>
<circle cx="19" cy="183.3" r="2.8" fill="#fff" stroke="#3060b0" stroke-width="1.4"/><path d="M21,181.3 L26,176.3 L28,178.3" fill="none" stroke="#3060b0" stroke-width="1.2"/>
<rect x="16.5" y="221.1" width="12" height="12" fill="#b4c4d8" stroke="#3060b0"/><path d="M14.5,221.6 h16 M14.5,232.6 h16 M17,219.6 v16 M28,219.6 v16" stroke="#2050a0" stroke-width="1.2"/>
<ellipse cx="22.5" cy="277.4" rx="8" ry="4.2" fill="#dfe6f8" stroke="#9ab0d8" stroke-width="0.8"/><text x="22.5" y="277.9" font-size="13" font-weight="bold" fill="#1a6ad8" text-anchor="middle" style="font-family:'Liberation Sans',sans-serif">A</text>
</svg><svg class="a" style="top:695px" width="1280" height="27" viewBox="0 695 1280 27" style="font-family:'Liberation Sans',sans-serif">
<defs><linearGradient id="sb" x1="0" x2="0" y1="0" y2="1"><stop offset="0" stop-color="#f8f8f8"/><stop offset="1" stop-color="#d8d8d8"/></linearGradient>
<linearGradient id="hb" x1="0" x2="0" y1="0" y2="1"><stop offset="0" stop-color="#eef6fa"/><stop offset="1" stop-color="#b8dcea"/></linearGradient></defs>
<rect x="0" y="695" width="1280" height="27" fill="#dedede"/>
<rect x="2" y="695" width="1276" height="1" fill="#1a9a4a"/>
<rect x="0" y="695" width="1.5" height="24" fill="#111"/>
<rect x="1278" y="695" width="1" height="25" fill="#e6eaec"/><rect x="1279" y="695" width="1" height="27" fill="#111"/>
<rect x="0" y="720" width="1280" height="1" fill="#fff"/>
<rect x="0" y="721" width="1280" height="1" fill="#000"/>
<rect x="5.5" y="697.5" width="19" height="18.5" fill="#c82020" stroke="#888" stroke-width="0.8"/>
<path d="M6,698 H24 V702.5 Q12,703.5 7,712.5 L6,712.5 Z" fill="#f8c400"/>
<path d="M7,712.5 Q12,703.5 24,702.5" stroke="#fff" stroke-width="1.3" fill="none"/>
<path d="M12.5,716 Q16,708 24,705 V716 Z" fill="#8cc21e"/>
<path d="M9,712 L20,700 L23,703 L12,715 Z" fill="#e8a050" stroke="#8a5020" stroke-width="0.6"/><path d="M9,712 L8,716 L12,715Z" fill="#fff"/>
<text x="27.5" y="712" font-size="12" fill="#555" style="font-family:'Liberation Sans',sans-serif">CAD迷你画图</text>
<rect x="146.5" y="698.5" width="72" height="19" rx="2" fill="url(#sb)" stroke="#7a7a7a"/>
<path d="M158,701 L152.5,709 L157,709 L154,715.5 L162,706 L157.5,706 L160.5,701 Z" fill="#fff" stroke="#333" stroke-width="1"/>
<text x="168" y="712.5" font-size="12" fill="#333" style="font-family:'Liberation Sans',sans-serif">快捷命令</text>
<rect x="225.5" y="699.5" width="424" height="17" rx="1" fill="#fff" stroke="#6a6a6a" stroke-width="1.2"/>
<rect x="1017.5" y="699.5" width="148" height="17" rx="1" fill="#efefef" stroke="#6e6e6e" stroke-width="1.2"/>
<rect x="1138.5" y="700" width="26.5" height="16" fill="url(#sb)"/>
<rect x="1138" y="700" width="1" height="16" fill="#888"/>
<text x="1020.5" y="712.5" font-size="12" fill="#999" style="font-family:'Liberation Sans',sans-serif">搜索文字</text>
<circle cx="1150" cy="706.5" r="3.8" fill="none" stroke="#555" stroke-width="1.4"/><path d="M1152.8,709.3 l3.5,3.5" stroke="#555" stroke-width="2"/>
<rect x="1169.5" y="697.5" width="21" height="21" fill="url(#sb)" stroke="#9a9a9a"/>
<rect x="1195.5" y="697.5" width="21" height="21" fill="url(#hb)" stroke="#9a9a9a"/>
<rect x="1221.5" y="697.5" width="21" height="21" fill="url(#sb)" stroke="#9a9a9a"/>
<rect x="1246.5" y="697.5" width="21" height="21" fill="url(#sb)" stroke="#9a9a9a"/>
<rect x="1174.5" y="701.5" width="11" height="10" fill="#fff" stroke="#222" stroke-width="1.2"/><path d="M1177,709.5 v-6 l4,6z" fill="none" stroke="#222" stroke-width="0.9"/><rect x="1172" y="714" width="16" height="1.2" fill="#222"/>
<path d="M1206,702 v13 M1199.5,708.5 h13" stroke="#111" stroke-width="2"/>
<path d="M1232,701 Q1229,708 1232,710 Q1226,712 1224,716 Q1229,713 1232,712 Q1235,713 1240,716 Q1238,712 1232,710 Q1235,708 1232,701Z" fill="#fff" stroke="#333" stroke-width="1"/>
<path d="M1257,708 L1264.80,708.00 A7.8,7.8 0 0 1 1260.90,714.75 Z" fill="#e82a2a"/><path d="M1257,708 L1260.90,714.75 A7.8,7.8 0 0 1 1253.10,714.75 Z" fill="#8a4ed0"/><path d="M1257,708 L1253.10,714.75 A7.8,7.8 0 0 1 1249.20,708.00 Z" fill="#2a5ad8"/><path d="M1257,708 L1249.20,708.00 A7.8,7.8 0 0 1 1253.10,701.25 Z" fill="#5cc048"/><path d="M1257,708 L1253.10,701.25 A7.8,7.8 0 0 1 1260.90,701.25 Z" fill="#ece070"/><path d="M1257,708 L1260.90,701.25 A7.8,7.8 0 0 1 1264.80,708.00 Z" fill="#eca040"/><circle cx="1257" cy="708" r="7.8" fill="none" stroke="#454a50" stroke-width="1.2"/>
</svg>
<svg class="a" style="left:46px;top:100px" width="1232" height="595" viewBox="46 100 1232 595">
<rect x="46" y="100" width="1232" height="595" fill="#000"/>
<path d="M492.40,230.50L504.90,230.50M545.50,230.50L578.10,230.50M618.70,230.50L661.50,230.50M701.50,230.50L745.10,230.50M785.70,230.50L818.30,230.50M858.90,230.50L871.40,230.50M492.40,230.50L492.40,321.20M492.40,321.20L610.60,321.20M642.70,321.20L646.30,321.20M467.50,320.80L467.50,552.20M646.30,230.50L646.30,378.90M558.40,321.20L558.40,347.20M558.40,375.60L558.40,378.90M467.50,378.90L558.40,378.90M467.50,428.40L522.60,428.40M556.70,428.40L560.80,428.40M593.60,428.40L681.90,428.40M558.40,428.40L558.40,552.20M467.50,552.20L488.30,552.20M538.10,552.20L571.00,552.20M871.40,230.50L871.40,321.20M753.20,321.20L871.40,321.20M717.50,321.20L721.10,321.20M896.30,320.80L896.30,552.20M717.50,230.50L717.50,378.90M805.40,321.20L805.40,347.20M805.40,375.60L805.40,378.90M805.40,378.90L896.30,378.90M841.20,428.40L896.30,428.40M803.00,428.40L807.10,428.40M681.90,428.40L770.20,428.40M805.40,428.40L805.40,552.20M875.50,552.20L896.30,552.20M792.80,552.20L825.70,552.20M646.30,378.90L717.50,378.90M681.90,378.90L681.90,552.20M669.60,552.20L694.20,552.20" stroke="#fff" stroke-width="8.8" stroke-linecap="square" fill="none" />
<path d="M517.20,321.20L517.20,348.50M517.20,374.30L517.20,378.90M846.60,321.20L846.60,348.50M846.60,374.30L846.60,378.90" stroke="#fff" stroke-width="6.2" stroke-linecap="square" fill="none" />
<path d="M492.40,230.50L504.90,230.50M545.50,230.50L578.10,230.50M618.70,230.50L661.50,230.50M701.50,230.50L745.10,230.50M785.70,230.50L818.30,230.50M858.90,230.50L871.40,230.50M492.40,230.50L492.40,321.20M492.40,321.20L610.60,321.20M642.70,321.20L646.30,321.20M467.50,320.80L467.50,552.20M646.30,230.50L646.30,378.90M558.40,321.20L558.40,347.20M558.40,375.60L558.40,378.90M467.50,378.90L558.40,378.90M467.50,428.40L522.60,428.40M556.70,428.40L560.80,428.40M593.60,428.40L681.90,428.40M558.40,428.40L558.40,552.20M467.50,552.20L488.30,552.20M538.10,552.20L571.00,552.20M871.40,230.50L871.40,321.20M753.20,321.20L871.40,321.20M717.50,321.20L721.10,321.20M896.30,320.80L896.30,552.20M717.50,230.50L717.50,378.90M805.40,321.20L805.40,347.20M805.40,375.60L805.40,378.90M805.40,378.90L896.30,378.90M841.20,428.40L896.30,428.40M803.00,428.40L807.10,428.40M681.90,428.40L770.20,428.40M805.40,428.40L805.40,552.20M875.50,552.20L896.30,552.20M792.80,552.20L825.70,552.20M646.30,378.90L717.50,378.90M681.90,378.90L681.90,552.20M669.60,552.20L694.20,552.20" stroke="#000" stroke-width="4.4" stroke-linecap="square" fill="none" />
<path d="M517.20,321.20L517.20,348.50M517.20,374.30L517.20,378.90M846.60,321.20L846.60,348.50M846.60,374.30L846.60,378.90" stroke="#000" stroke-width="1.6" stroke-linecap="square" fill="none" />
<path d="M575.4,555.5 H665.2 M698.5999999999999,555.5 H788.4" stroke="#fff" stroke-width="1"/>
<path d="M509.3,227.20H541.1M509.3,229.40H541.1M509.3,231.60H541.1M509.3,233.80H541.1M582.5,227.20H614.3M582.5,229.40H614.3M582.5,231.60H614.3M582.5,233.80H614.3M665.9,227.20H697.1M665.9,229.40H697.1M665.9,231.60H697.1M665.9,233.80H697.1M749.5,227.20H781.3M749.5,229.40H781.3M749.5,231.60H781.3M749.5,233.80H781.3M822.7,227.20H854.5M822.7,229.40H854.5M822.7,231.60H854.5M822.7,233.80H854.5M471.4,317.90H488.5M471.4,320.10H488.5M471.4,322.30H488.5M471.4,324.50H488.5M875.3,317.90H892.4M875.3,320.10H892.4M875.3,322.30H892.4M875.3,324.50H892.4" stroke="#ffff00" stroke-width="1.1" fill="none"/>
<path d="M492.7,548.7H533.7M492.2,555.7V562.23H534.2V555.7M490.4,555.7V564.12H536.0V555.7M488.59999999999997,555.7V566.00H537.8000000000001V555.7M830.0999999999999,548.7H871.0999999999999M829.5999999999999,555.7V562.23H871.5999999999999V555.7M827.8,555.7V564.12H873.3999999999999V555.7M825.9999999999999,555.7V566.00H875.1999999999999V555.7" stroke="#ffff00" stroke-width="1.1" fill="none"/>
<path d="M554.4,556.5V596.5H808.3V556.5 M558.7,556.5V593.3H680.3V556.5 M683.5,556.5V593.3H805.3V556.5" stroke="#ff00ff" stroke-width="1.2" fill="none"/>
<path d="M638.3,320.0L626.6,300.7A22.57,22.57 0 0 0 615.0,318.5M725.5,320.0L737.1999999999999,300.7A22.57,22.57 0 0 1 748.8,318.5M515.2,371.5L498.3,361.0A19.90,19.90 0 0 1 514.2,350.8M556.5,371.5L539.3,361.0A20.15,20.15 0 0 1 554.2,351.0M848.5999999999999,371.5L865.5,361.0A19.90,19.90 0 0 0 849.5999999999999,350.8M552.3,431.5L538.8,448.8A21.94,21.94 0 0 1 527.0,432.0M565.2,431.5L577.5,448.8A21.23,21.23 0 0 0 589.2,432.0M811.5,431.5L825.0,448.8A21.94,21.94 0 0 0 836.8,432.0M798.5999999999999,431.5L786.3,448.8A21.23,21.23 0 0 1 774.5999999999999,432.0" stroke="#ffff00" stroke-width="1.1" fill="none"/>
<path d="M643.3,385.5V401.5L644.5,403V421 M720.5,385.5V401.5L719.3,403V421" stroke="#ffff00" stroke-width="1.6" fill="none"/>
<path d="M491.2,403.6H551.7M812.1,403.6H872.6" stroke="#ffff00" stroke-width="2.2" fill="none"/>
<path d="M649,266.60H714.8M649,273.93H714.8M649,281.26H714.8M649,288.59H714.8M649,295.92H714.8M649,303.25H714.8M649,310.58H714.8M649,317.91H714.8M649,325.24H714.8M649,332.57H714.8M492.50,382.5V403.3M492.50,405.6V425.3M498.85,382.5V403.3M498.85,405.6V425.3M505.20,382.5V403.3M505.20,405.6V425.3M511.55,382.5V403.3M511.55,405.6V425.3M517.90,382.5V403.3M517.90,405.6V425.3M524.25,382.5V403.3M524.25,405.6V425.3M530.60,382.5V403.3M536.95,382.5V403.3M543.30,382.5V403.3M549.65,382.5V403.3M471.1,403.3H491.2M491.2,405.6H526.4M491.2,402.8V405.6M526.4,402.8V405.6M871.30,382.5V403.3M871.30,405.6V425.3M864.95,382.5V403.3M864.95,405.6V425.3M858.60,382.5V403.3M858.60,405.6V425.3M852.25,382.5V403.3M852.25,405.6V425.3M845.90,382.5V403.3M845.90,405.6V425.3M839.55,382.5V403.3M839.55,405.6V425.3M833.20,382.5V403.3M826.85,382.5V403.3M820.50,382.5V403.3M814.15,382.5V403.3M872.6,403.3H892.7M837.4,405.6H872.6M872.6,402.8V405.6M837.4,402.8V405.6M833.4,382.9H871.8M837.4,425.2H871.8" stroke="#ffff00" stroke-width="1.1" fill="none"/>
<rect x="680.3" y="264.6" width="3.4" height="69.8" fill="#ffff00"/>
<path d="M552.3,393.2H481.7V415.4H524.3 M811.5,393.2H882.0999999999999V415.4H839.5" stroke="#00ff00" stroke-width="1.1" fill="none"/>
<rect x="513.5" y="413.6" width="6" height="3.6" fill="#00ff00"/><rect x="844.3" y="413.6" width="6" height="3.6" fill="#00ff00"/>
<path d="M463,165.4H900.8 M463,187.4H900.8M467.5,161V249M492.4,183V249M558.4,183V249M646.3,183V249M717.5,183V249M805.4,183V249M871.4,183V249M896.3,161V249M463,641.6H900.8 M463,663.6H900.8M467.5,564V667M558.4,564V645.7M681.9,564V645.7M805.4,564V645.7M896.3,564V667M357.7,226V556 M379.4,226V556 M1000.9,226V556 M978.6,226V556M354,230.5H440.6M901.2,230.5H1004.5M375.5,321.2H440.6M901.2,321.2H982.5M375.5,378.9H440.6M901.2,378.9H982.5M375.5,428.4H440.6M901.2,428.4H982.5M354,552.2H440.6M901.2,552.2H1004.5" stroke="#00ff00" stroke-width="1.1" fill="none"/>
<path d="M464.5,190.4L470.5,184.4M489.4,190.4L495.4,184.4M555.4,190.4L561.4,184.4M643.3,190.4L649.3,184.4M714.5,190.4L720.5,184.4M802.4,190.4L808.4,184.4M868.4,190.4L874.4,184.4M893.3,190.4L899.3,184.4M464.5,168.4L470.5,162.4M893.3,168.4L899.3,162.4M464.5,644.6L470.5,638.6M555.4,644.6L561.4,638.6M678.9,644.6L684.9,638.6M802.4,644.6L808.4,638.6M893.3,644.6L899.3,638.6M464.5,666.6L470.5,660.6M893.3,666.6L899.3,660.6M376.4,233.5L382.4,227.5M975.6,233.5L981.6,227.5M376.4,324.2L382.4,318.2M975.6,324.2L981.6,318.2M376.4,381.9L382.4,375.9M975.6,381.9L981.6,375.9M376.4,431.4L382.4,425.4M975.6,431.4L981.6,425.4M376.4,555.2L382.4,549.2M975.6,555.2L981.6,549.2M354.7,233.5L360.7,227.5M354.7,555.2L360.7,549.2M997.9,233.5L1003.9,227.5M997.9,555.2L1003.9,549.2" stroke="#00ff00" stroke-width="2.2" fill="none"/>
<g fill="#fff" style="font-family:'Liberation Sans',sans-serif"><text transform="translate(681.9,156.90) scale(1.0,1.25)" y="4.40" font-size="11" text-anchor="middle" >15600</text><text transform="translate(479.95,179.60) scale(1.0,1.25)" y="4.40" font-size="11" text-anchor="middle" >900</text><text transform="translate(525.4,179.60) scale(1.0,1.25)" y="4.40" font-size="11" text-anchor="middle" >2400</text><text transform="translate(602.3499999999999,179.60) scale(1.0,1.25)" y="4.40" font-size="11" text-anchor="middle" >3200</text><text transform="translate(681.9,179.60) scale(1.0,1.25)" y="4.40" font-size="11" text-anchor="middle" >2600</text><text transform="translate(761.45,179.60) scale(1.0,1.25)" y="4.40" font-size="11" text-anchor="middle" >3200</text><text transform="translate(838.4,179.60) scale(1.0,1.25)" y="4.40" font-size="11" text-anchor="middle" >2400</text><text transform="translate(883.8499999999999,179.60) scale(1.0,1.25)" y="4.40" font-size="11" text-anchor="middle" >900</text><text transform="translate(512.95,632.60) scale(1.0,1.25)" y="4.40" font-size="11" text-anchor="middle" >3300</text><text transform="translate(620.15,632.60) scale(1.0,1.25)" y="4.40" font-size="11" text-anchor="middle" >4500</text><text transform="translate(743.65,632.60) scale(1.0,1.25)" y="4.40" font-size="11" text-anchor="middle" >4500</text><text transform="translate(850.8499999999999,632.60) scale(1.0,1.25)" y="4.40" font-size="11" text-anchor="middle" >3300</text><text transform="translate(681.9,654.60) scale(1.0,1.25)" y="4.40" font-size="11" text-anchor="middle" >15600</text><text transform="translate(373.04,275.85) rotate(-90) scale(1,1.25)" y="3.96" font-size="11" text-anchor="middle">3300</text><text transform="translate(971.54,275.85) rotate(-90) scale(1,1.25)" y="3.96" font-size="11" text-anchor="middle">3300</text><text transform="translate(373.04,350.04999999999995) rotate(-90) scale(1,1.25)" y="3.96" font-size="11" text-anchor="middle">2100</text><text transform="translate(971.54,350.04999999999995) rotate(-90) scale(1,1.25)" y="3.96" font-size="11" text-anchor="middle">2100</text><text transform="translate(373.04,403.65) rotate(-90) scale(1,1.25)" y="3.96" font-size="11" text-anchor="middle">1800</text><text transform="translate(971.54,403.65) rotate(-90) scale(1,1.25)" y="3.96" font-size="11" text-anchor="middle">1800</text><text transform="translate(373.04,490.3) rotate(-90) scale(1,1.25)" y="3.96" font-size="11" text-anchor="middle">4500</text><text transform="translate(971.54,490.3) rotate(-90) scale(1,1.25)" y="3.96" font-size="11" text-anchor="middle">4500</text><text transform="translate(351.04,391) rotate(-90) scale(1,1.25)" y="3.96" font-size="11" text-anchor="middle">11700</text><text transform="translate(993.04,391) rotate(-90) scale(1,1.25)" y="3.96" font-size="11" text-anchor="middle">11700</text><text transform="translate(799.4,265.60) scale(0.87,1.22)" y="5.40" font-size="13.5" text-anchor="middle" >卧室</text><text transform="translate(802.2,286.60) scale(1.0,1.25)" y="4.40" font-size="11" text-anchor="middle" >17.49m²</text><text transform="translate(607.3,391.60) scale(0.87,1.22)" y="5.40" font-size="13.5" text-anchor="middle" >楼上</text><text transform="translate(568.4,388.40) scale(0.87,1.22)" y="5.40" font-size="13.5" text-anchor="middle" >下</text><text transform="translate(805.6,388.40) scale(0.87,1.22)" y="5.40" font-size="13.5" text-anchor="middle" >下</text><text transform="translate(766.4,364.10) scale(0.87,1.22)" y="5.40" font-size="13.5" text-anchor="middle" >家庭厅</text><text transform="translate(764,384.60) scale(1.0,1.25)" y="4.40" font-size="11" text-anchor="middle" >11.31m²</text><text transform="translate(833,361.10) scale(1.0,1.25)" y="4.40" font-size="11" text-anchor="middle" >6.93m²</text><text transform="translate(873.8,343.10) scale(0.87,1.22)" y="5.40" font-size="13.5" text-anchor="middle" >卫生间</text><text transform="translate(703,417.60) scale(1.0,1.25)" y="4.40" font-size="11" text-anchor="middle" >1.95m²</text><text transform="translate(734.4,491.10) scale(0.87,1.22)" y="5.40" font-size="13.5" text-anchor="middle" >卧室</text><text transform="translate(742.5,511.10) scale(1.0,1.25)" y="4.40" font-size="11" text-anchor="middle" >18.9m²</text><text transform="translate(853.5,490.10) scale(0.87,1.22)" y="5.40" font-size="13.5" text-anchor="middle" >卧室</text><text transform="translate(846.5,508.10) scale(1.0,1.25)" y="4.40" font-size="11" text-anchor="middle" >14.85m²</text><text transform="translate(738.5,566.10) scale(0.87,1.22)" y="5.40" font-size="13.5" text-anchor="middle" >阳台</text><text transform="translate(738,581.60) scale(1.0,1.25)" y="4.40" font-size="11" text-anchor="middle" >6.93m²</text></g>
</svg><div class="a" style="left:1278px;top:100px;width:1px;height:595px;background:#d8e0e8"></div><div class="a" style="left:1279px;top:100px;width:1px;height:595px;background:#111"></div><svg class="a" width="70" height="64"><defs><linearGradient id="av2" x1="0" x2="1" y1="0" y2="1"><stop offset="0" stop-color="#dfe2e6"/><stop offset="0.6" stop-color="#e8eaed"/><stop offset="1" stop-color="#cfd3d8"/></linearGradient></defs><rect x="8.5" y="5.5" width="53" height="53.5" rx="5.5" fill="#d4dcd6" stroke="#bfc9c2"/>
<rect x="10.6" y="7.9" width="48.8" height="49" rx="3.5" fill="url(#av2)" stroke="#22a84a" stroke-width="2.7"/>
<path d="M20.5,49.5 Q21,40.5 30,37.2 L40,37.2 Q49.5,40.5 50.5,49.5 Z" fill="#5e9b3d"/>
<path d="M28.5,37.8 L34.5,44.3 L35.5,44.3 L41.5,37.8 L38.5,35.8 L35,39.5 L31.5,35.8 Z" fill="#fbfbf8"/>
<ellipse cx="35" cy="25.2" rx="11.6" ry="10.6" fill="#a98b5f"/>
<path d="M25.4,29.5 Q25.8,41 35,41 Q44.2,41 44.6,29.5 Q44,26 40,25.8 Q37,26 35,28 Q33,26 30,25.8 Q26,26 25.4,29.5 Z" fill="#efdfb9"/>
</svg></body></html>
